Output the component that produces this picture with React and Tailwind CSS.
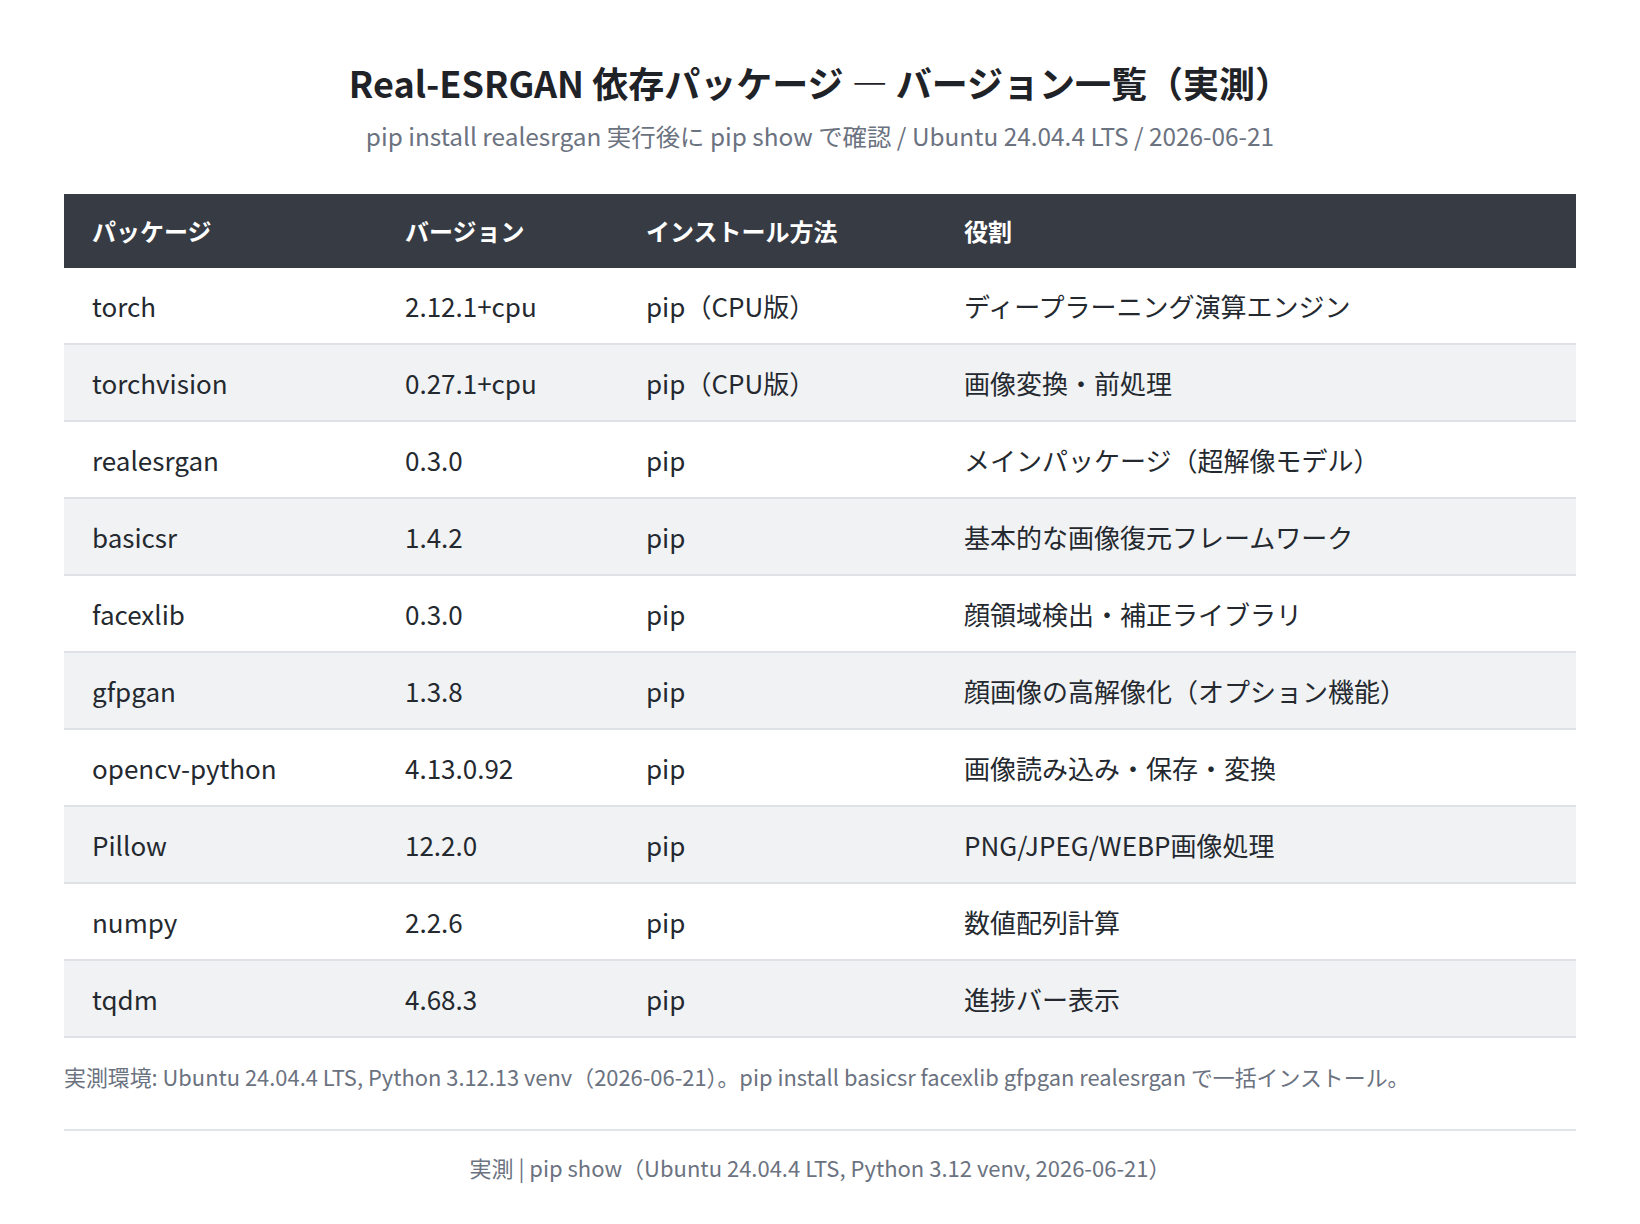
import React from "react";

const rows = [
  ["torch", "2.12.1+cpu", "pip（CPU版）", "ディープラーニング演算エンジン"],
  ["torchvision", "0.27.1+cpu", "pip（CPU版）", "画像変換・前処理"],
  ["realesrgan", "0.3.0", "pip", "メインパッケージ（超解像モデル）"],
  ["basicsr", "1.4.2", "pip", "基本的な画像復元フレームワーク"],
  ["facexlib", "0.3.0", "pip", "顔領域検出・補正ライブラリ"],
  ["gfpgan", "1.3.8", "pip", "顔画像の高解像化（オプション機能）"],
  ["opencv-python", "4.13.0.92", "pip", "画像読み込み・保存・変換"],
  ["Pillow", "12.2.0", "pip", "PNG/JPEG/WEBP画像処理"],
  ["numpy", "2.2.6", "pip", "数値配列計算"],
  ["tqdm", "4.68.3", "pip", "進捗バー表示"],
];

export default function App() {
  return (
    <div
      className="bg-white min-h-[1224px] px-16 pt-[52px] text-[#24292f]"
      style={{ fontFamily: '"Noto Sans CJK JP", "Noto Sans", sans-serif' }}
    >
      <h1 className="text-center text-[36px] font-bold leading-[60px] text-[#1f2328]">
        Real-ESRGAN 依存パッケージ ― バージョン一覧（実測）
      </h1>
      <p className="text-center text-[24.4px] leading-[36px] text-[#6b7280] mt-[6px]">
        pip install realesrgan 実行後に pip show で確認 / Ubuntu 24.04.4 LTS / 2026-06-21
      </p>
      <table className="w-full mt-[40px] border-collapse text-[26px] leading-[39px]">
        <colgroup>
          <col className="w-[313px]" />
          <col className="w-[241px]" />
          <col className="w-[318px]" />
          <col />
        </colgroup>
        <thead>
          <tr className="bg-[#373b43] text-white text-[24px] leading-[36px]">
            <th className="text-left font-bold px-[28px] py-[19px]">パッケージ</th>
            <th className="text-left font-bold px-[28px] py-[19px]">バージョン</th>
            <th className="text-left font-bold px-[28px] py-[19px]">インストール方法</th>
            <th className="text-left font-bold px-[28px] py-[19px]">役割</th>
          </tr>
        </thead>
        <tbody>
          {rows.map((r, i) => (
            <tr
              key={i}
              className={`border-b-2 border-[#dee1e5] ${i % 2 === 1 ? "bg-[#f1f2f4]" : "bg-white"}`}
            >
              {r.map((c, j) => (
                <td key={j} className="px-[28px] py-[18px] text-[#24292f]">
                  {c}
                </td>
              ))}
            </tr>
          ))}
        </tbody>
      </table>
      <p className="text-[21.9px] leading-[33px] text-[#6b7280] mt-[22px]">
        実測環境: Ubuntu 24.04.4 LTS, Python 3.12.13 venv（2026-06-21）。pip install basicsr facexlib gfpgan realesrgan で一括インストール。
      </p>
      <div className="mt-[36px] border-t-2 border-[#e1e4e8] pt-[20px]">
        <p className="text-center text-[22px] leading-[33px] text-[#6b7280]">
          実測 | pip show（Ubuntu 24.04.4 LTS, Python 3.12 venv, 2026-06-21）
        </p>
      </div>
    </div>
  );
}
